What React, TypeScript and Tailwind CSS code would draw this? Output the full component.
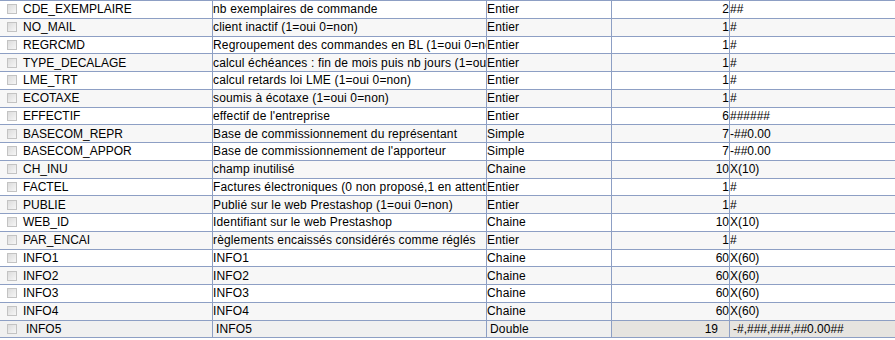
import React from "react";

type Field = {
    name: string;
    label: string;
    type: string;
    size: number;
    format: string;
};

const FIELDS: Field[] = [
    { name: "CDE_EXEMPLAIRE", label: "nb exemplaires de commande", type: "Entier", size: 2, format: "##" },
    { name: "NO_MAIL", label: "client inactif (1=oui 0=non)", type: "Entier", size: 1, format: "#" },
    { name: "REGRCMD", label: "Regroupement des commandes en BL (1=oui 0=non)", type: "Entier", size: 1, format: "#" },
    { name: "TYPE_DECALAGE", label: "calcul échéances : fin de mois puis nb jours (1=oui 0=non)", type: "Entier", size: 1, format: "#" },
    { name: "LME_TRT", label: "calcul retards loi LME (1=oui 0=non)", type: "Entier", size: 1, format: "#" },
    { name: "ECOTAXE", label: "soumis à écotaxe (1=oui 0=non)", type: "Entier", size: 1, format: "#" },
    { name: "EFFECTIF", label: "effectif de l'entreprise", type: "Entier", size: 6, format: "######" },
    { name: "BASECOM_REPR", label: "Base de commissionnement du représentant", type: "Simple", size: 7, format: "-##0.00" },
    { name: "BASECOM_APPOR", label: "Base de commissionnement de l'apporteur", type: "Simple", size: 7, format: "-##0.00" },
    { name: "CH_INU", label: "champ inutilisé", type: "Chaine", size: 10, format: "X(10)" },
    { name: "FACTEL", label: "Factures électroniques (0 non proposé,1 en attente,2 accepté)", type: "Entier", size: 1, format: "#" },
    { name: "PUBLIE", label: "Publié sur le web Prestashop (1=oui 0=non)", type: "Entier", size: 1, format: "#" },
    { name: "WEB_ID", label: "Identifiant sur le web Prestashop", type: "Chaine", size: 10, format: "X(10)" },
    { name: "PAR_ENCAI", label: "règlements encaissés considérés comme réglés", type: "Entier", size: 1, format: "#" },
    { name: "INFO1", label: "INFO1", type: "Chaine", size: 60, format: "X(60)" },
    { name: "INFO2", label: "INFO2", type: "Chaine", size: 60, format: "X(60)" },
    { name: "INFO3", label: "INFO3", type: "Chaine", size: 60, format: "X(60)" },
    { name: "INFO4", label: "INFO4", type: "Chaine", size: 60, format: "X(60)" },
    { name: "INFO5", label: "INFO5", type: "Double", size: 19, format: "-#,###,###,##0.00##" },
];

function Checkbox() {
    return (
        <span className="ml-[7px] mr-[6px] w-[10px] h-[10px] shrink-0 border border-[#c3c3c3] bg-gradient-to-br from-[#dcdcdc] to-[#f6f6f6]" />
    );
}

export default function App() {
    const editing = FIELDS.length - 1;

    return (
        <div className="w-[895px] h-[340px] bg-white overflow-hidden [font-family:'Liberation_Sans',Arial,sans-serif] text-[12px] text-black">
            <div className="border-t border-[#8d9fc4]">
                {FIELDS.map((f, i) => {
                    const isEdit = i === editing;
                    const rowBg = isEdit ? "bg-[#f0f0f0]" : i % 2 === 1 ? "bg-[#f7f7f7]" : "bg-white";
                    const cell = "h-full flex items-center overflow-hidden whitespace-nowrap border-r border-[#8d9fc4]";
                    return (
                        <div
                            key={f.name}
                            className={`grid grid-cols-[213px_274px_125px_118px_1fr] h-[17.75px] border-b border-[#8d9fc4] leading-[16px] ${rowBg}`}
                        >
                            {/* Nom du champ */}
                            <div className={cell}>
                                <Checkbox />
                                <span className={isEdit ? "pl-[3px]" : ""}>{f.name}</span>
                            </div>
                            {/* Libellé */}
                            <div className={`${cell} tracking-[0.15px]`}>
                                <span className={isEdit ? "pl-[3px]" : ""}>{f.label}</span>
                            </div>
                            {/* Type */}
                            <div className={`${cell} tracking-[0.15px]`}>
                                <span className={isEdit ? "pl-[3px]" : ""}>{f.type}</span>
                            </div>
                            {/* Taille */}
                            <div className={`${cell} justify-end ${isEdit ? "bg-[#e6e4e0] pr-[11px]" : ""}`}>
                                {f.size}
                            </div>
                            {/* Format */}
                            <div className={`h-full flex items-center overflow-hidden whitespace-nowrap ${isEdit ? "bg-[#e6e4e0] pl-[3px]" : ""}`}>
                                {f.format}
                            </div>
                        </div>
                    );
                })}
            </div>
        </div>
    );
}
